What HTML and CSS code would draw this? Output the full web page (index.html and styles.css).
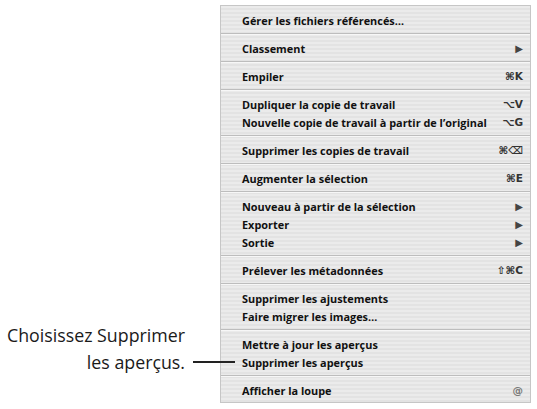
FILE: index.html
```html
<!DOCTYPE html>
<html lang="fr">
<head>
<meta charset="utf-8">
<title>Menu</title>
<link rel="stylesheet" href="styles.css">
</head>
<body>
<div class="page">
  <div class="callout">
    <p class="callout-text">Choisissez Supprimer<br>les aperçus.</p>
  </div>
  <span class="leader"></span>
  <div class="menu">
    <div class="group">
      <div class="item"><span>Gérer les fichiers référencés…</span></div>
    </div>
    <div class="sep"></div>
    <div class="group">
      <div class="item"><span>Classement</span><span class="arrow">▶</span></div>
    </div>
    <div class="sep"></div>
    <div class="group">
      <div class="item"><span>Empiler</span><span class="key">⌘K</span></div>
    </div>
    <div class="sep"></div>
    <div class="group">
      <div class="item"><span>Dupliquer la copie de travail</span><span class="key">⌥V</span></div>
      <div class="item"><span>Nouvelle copie de travail à partir de l’original</span><span class="key">⌥G</span></div>
    </div>
    <div class="sep"></div>
    <div class="group">
      <div class="item"><span>Supprimer les copies de travail</span><span class="key">⌘⌫</span></div>
    </div>
    <div class="sep"></div>
    <div class="group">
      <div class="item"><span>Augmenter la sélection</span><span class="key">⌘E</span></div>
    </div>
    <div class="sep"></div>
    <div class="group">
      <div class="item"><span>Nouveau à partir de la sélection</span><span class="arrow">▶</span></div>
      <div class="item"><span>Exporter</span><span class="arrow">▶</span></div>
      <div class="item"><span>Sortie</span><span class="arrow">▶</span></div>
    </div>
    <div class="sep"></div>
    <div class="group">
      <div class="item"><span>Prélever les métadonnées</span><span class="key">⇧⌘C</span></div>
    </div>
    <div class="sep"></div>
    <div class="group">
      <div class="item"><span>Supprimer les ajustements</span></div>
      <div class="item"><span>Faire migrer les images…</span></div>
    </div>
    <div class="sep"></div>
    <div class="group">
      <div class="item"><span>Mettre à jour les aperçus</span></div>
      <div class="item"><span>Supprimer les aperçus</span></div>
    </div>
    <div class="sep"></div>
    <div class="group">
      <div class="item"><span>Afficher la loupe</span><span class="key dim">@</span></div>
    </div>
  </div>
</div>
</body>
</html>
```

FILE: styles.css
```css
html, body {
  margin: 0;
  padding: 0;
  background: #ffffff;
}

.page {
  position: relative;
  display: flex;
  width: 537px;
  height: 409px;
  padding-top: 5px;
  box-sizing: border-box;
}

.callout {
  width: 220px;
  display: flex;
  flex-direction: column;
  justify-content: flex-end;
  padding-bottom: 33px;
  box-sizing: border-box;
}

.callout-text {
  margin: 0;
  padding-right: 35px;
  text-align: right;
  font-family: "Open Sans", "DejaVu Sans", sans-serif;
  font-size: 17.8px;
  line-height: 27px;
  color: #1a1a1a;
}

.leader {
  position: absolute;
  left: 193px;
  top: 361px;
  width: 42px;
  height: 1.5px;
  background: #222222;
  z-index: 2;
}

.menu {
  width: 311px;
  height: 398px;
  box-sizing: border-box;
  border: 1px solid #c6c6c6;
  background: repeating-linear-gradient(180deg, #ebebeb 0px, #ebebeb 2px, #e3e3e3 2px, #e3e3e3 4px);
  font-family: "Open Sans", "DejaVu Sans", sans-serif;
  font-weight: 700;
  font-size: 10.9px;
  color: #111111;
}

.group {
  padding: 4px 0;
}

.group:first-child {
  padding-top: 5px;
}

.sep {
  height: 0;
  border-top: 1px solid #bdbdbd;
  border-bottom: 1px solid #f7f7f7;
}

.item {
  display: flex;
  justify-content: space-between;
  align-items: center;
  height: 18px;
  padding: 0 7px 0 21px;
}

.key {
  font-family: "DejaVu Sans", sans-serif;
  font-size: 10.5px;
  color: #333333;
}

.key.dim {
  color: #7a7a7a;
}

.arrow {
  font-family: "DejaVu Sans", sans-serif;
  font-size: 10px;
  color: #444444;
}
```
